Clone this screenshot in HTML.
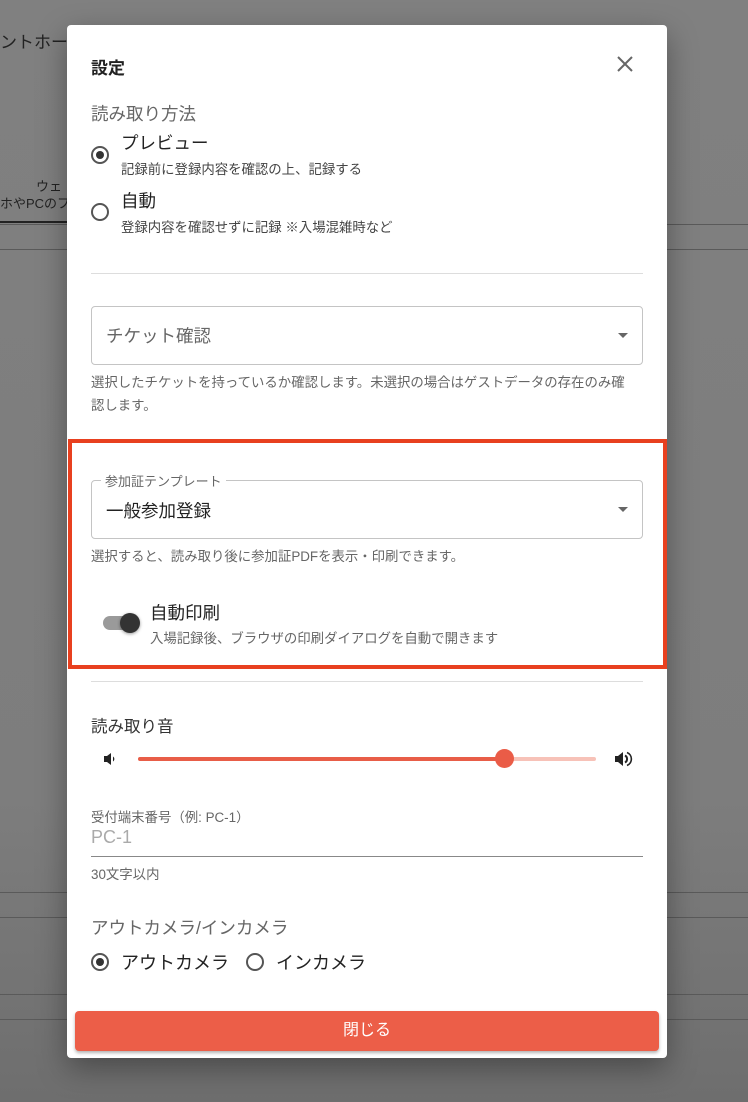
<!DOCTYPE html>
<html><head><meta charset="utf-8"><style>
*{margin:0;padding:0;box-sizing:border-box}
body{width:748px;height:1102px;position:relative;overflow:hidden;background:linear-gradient(#808080 0,#7d7d7d 800px,#6e6e6e 1102px);font-family:"Liberation Sans","Noto Sans CJK JP",sans-serif;color:#222}
.a{position:absolute;white-space:nowrap}
.bgl{position:absolute;left:0;width:748px;height:1px;background:#5a5a5a}
.modal{position:absolute;left:67px;top:25px;width:600px;height:1033px;background:#fff;border-radius:4px;box-shadow:0 10px 30px rgba(0,0,0,.35)}
.radio{position:absolute;width:18px;height:18px;border:2px solid #555;border-radius:50%}
.radio.on::after{content:"";position:absolute;left:3px;top:3px;width:8px;height:8px;border-radius:50%;background:#333}
.hr{position:absolute;left:24px;width:552px;height:1px;background:#ddd}
.sel{position:absolute;left:24px;width:552px;height:59px;border:1px solid #c4c4c4;border-radius:4px}
.tri{position:absolute;right:14px;top:26px;border-left:5px solid transparent;border-right:5px solid transparent;border-top:5px solid #666}
.g{color:#666}
.s{font-size:13.4px}
</style></head><body>
<div class="a" style="left:0;top:28px;font-size:17px;color:#222">ントホーム</div>
<div class="a" style="left:36px;top:176px;font-size:13px;color:#222">ウェ</div>
<div class="a" style="left:0;top:193px;font-size:13px;color:#222">ホやPCのフ</div>
<div style="position:absolute;left:0;top:221px;width:67px;height:2px;background:#222"></div>
<div class="bgl" style="top:224px"></div><div class="bgl" style="top:249px"></div>
<div class="bgl" style="top:892px"></div><div class="bgl" style="top:917px"></div>
<div class="bgl" style="top:994px"></div><div class="bgl" style="top:1019px"></div>
<div class="modal">
<div class="a" style="left:24px;top:29px;font-size:17px;font-weight:bold">設定</div>
<svg class="a" style="left:549px;top:30px" width="18" height="18" viewBox="0 0 18 18"><path d="M2 2L16 16M16 2L2 16" stroke="#666" stroke-width="2"/></svg>
<div class="a g" style="left:24px;top:76px;font-size:17.5px">読み取り方法</div>
<div class="radio on" style="left:24px;top:121px"></div>
<div class="a" style="left:54px;top:105px;font-size:17.5px">プレビュー</div>
<div class="a s" style="left:54px;top:133px;color:#444">記録前に登録内容を確認の上、記録する</div>
<div class="radio" style="left:24px;top:178px"></div>
<div class="a" style="left:54px;top:163px;font-size:17.5px">自動</div>
<div class="a s" style="left:54px;top:191px;color:#444">登録内容を確認せずに記録 ※入場混雑時など</div>
<div class="hr" style="top:248px"></div>
<div class="sel" style="top:281px"><div class="a g" style="left:14px;top:16px;font-size:17.5px">チケット確認</div><div class="tri"></div></div>
<div class="a g s" style="left:24px;top:346px">選択したチケットを持っているか確認します。未選択の場合はゲストデータの存在のみ確</div>
<div class="a g s" style="left:24px;top:369px">認します。</div>
<div style="position:absolute;left:1px;top:414px;width:599px;height:230px;border:4px solid #e8401f"></div>
<div class="sel" style="top:455px"><div class="a" style="left:14px;top:17px;font-size:17.5px">一般参加登録</div><div class="tri"></div></div>
<div class="a g" style="left:34px;top:446px;font-size:13px;background:#fff;padding:0 4px">参加証テンプレート</div>
<div class="a g s" style="left:24px;top:520px">選択すると、読み取り後に参加証PDFを表示・印刷できます。</div>
<div style="position:absolute;left:36px;top:591px;width:34px;height:14px;border-radius:7px;background:#9a9a9a"></div>
<div style="position:absolute;left:53px;top:588px;width:20px;height:20px;border-radius:50%;background:#333;box-shadow:0 1px 3px rgba(0,0,0,.4)"></div>
<div class="a" style="left:83px;top:575px;font-size:17.5px">自動印刷</div>
<div class="a g s" style="left:83px;top:602px">入場記録後、ブラウザの印刷ダイアログを自動で開きます</div>
<div class="hr" style="top:656px"></div>
<div class="a" style="left:24px;top:688px;font-size:16.5px;color:#333">読み取り音</div>
<svg class="a" style="left:35px;top:726px" width="16" height="16" viewBox="0 0 16 16"><path d="M2 5h3l4-3v12l-4-3H2z" fill="#222"/><path d="M11 5.5a3 3 0 0 1 0 5" fill="#222"/></svg>
<div style="position:absolute;left:71px;top:732px;width:366px;height:4px;background:#e85d47;border-radius:2px"></div>
<div style="position:absolute;left:437px;top:732px;width:92px;height:4px;background:#f7c2b8;border-radius:2px"></div>
<div style="position:absolute;left:428px;top:724px;width:19px;height:19px;border-radius:50%;background:#ea5c47"></div>
<svg class="a" style="left:546px;top:724px" width="20" height="20" viewBox="0 0 20 20"><path d="M2 7h3l5-4v14l-5-4H2z" fill="#222"/><path d="M12 6.5a4 4 0 0 1 0 7" stroke="#222" stroke-width="2" fill="none"/><path d="M14 3.5a7 7 0 0 1 0 13" stroke="#222" stroke-width="1.6" fill="none"/></svg>
<div class="a g" style="left:24px;top:781px;font-size:13.4px">受付端末番号（例: PC-1）</div>
<div class="a" style="left:24px;top:802px;font-size:18px;color:#aaa">PC-1</div>
<div class="hr" style="top:831px;background:#888"></div>
<div class="a g s" style="left:24px;top:838px">30文字以内</div>
<div class="a g" style="left:24px;top:890px;font-size:17.5px">アウトカメラ/インカメラ</div>
<div class="radio on" style="left:24px;top:928px"></div>
<div class="a" style="left:54px;top:924px;font-size:18px">アウトカメラ</div>
<div class="radio" style="left:179px;top:928px"></div>
<div class="a" style="left:209px;top:924px;font-size:18px">インカメラ</div>
<div style="position:absolute;left:8px;top:986px;width:584px;height:40px;background:#ec5e48;border-radius:4px;box-shadow:0 2px 3px rgba(0,0,0,.3);color:#fff;font-size:16px;text-align:center;line-height:40px">閉じる</div>
</div>
</body></html>
